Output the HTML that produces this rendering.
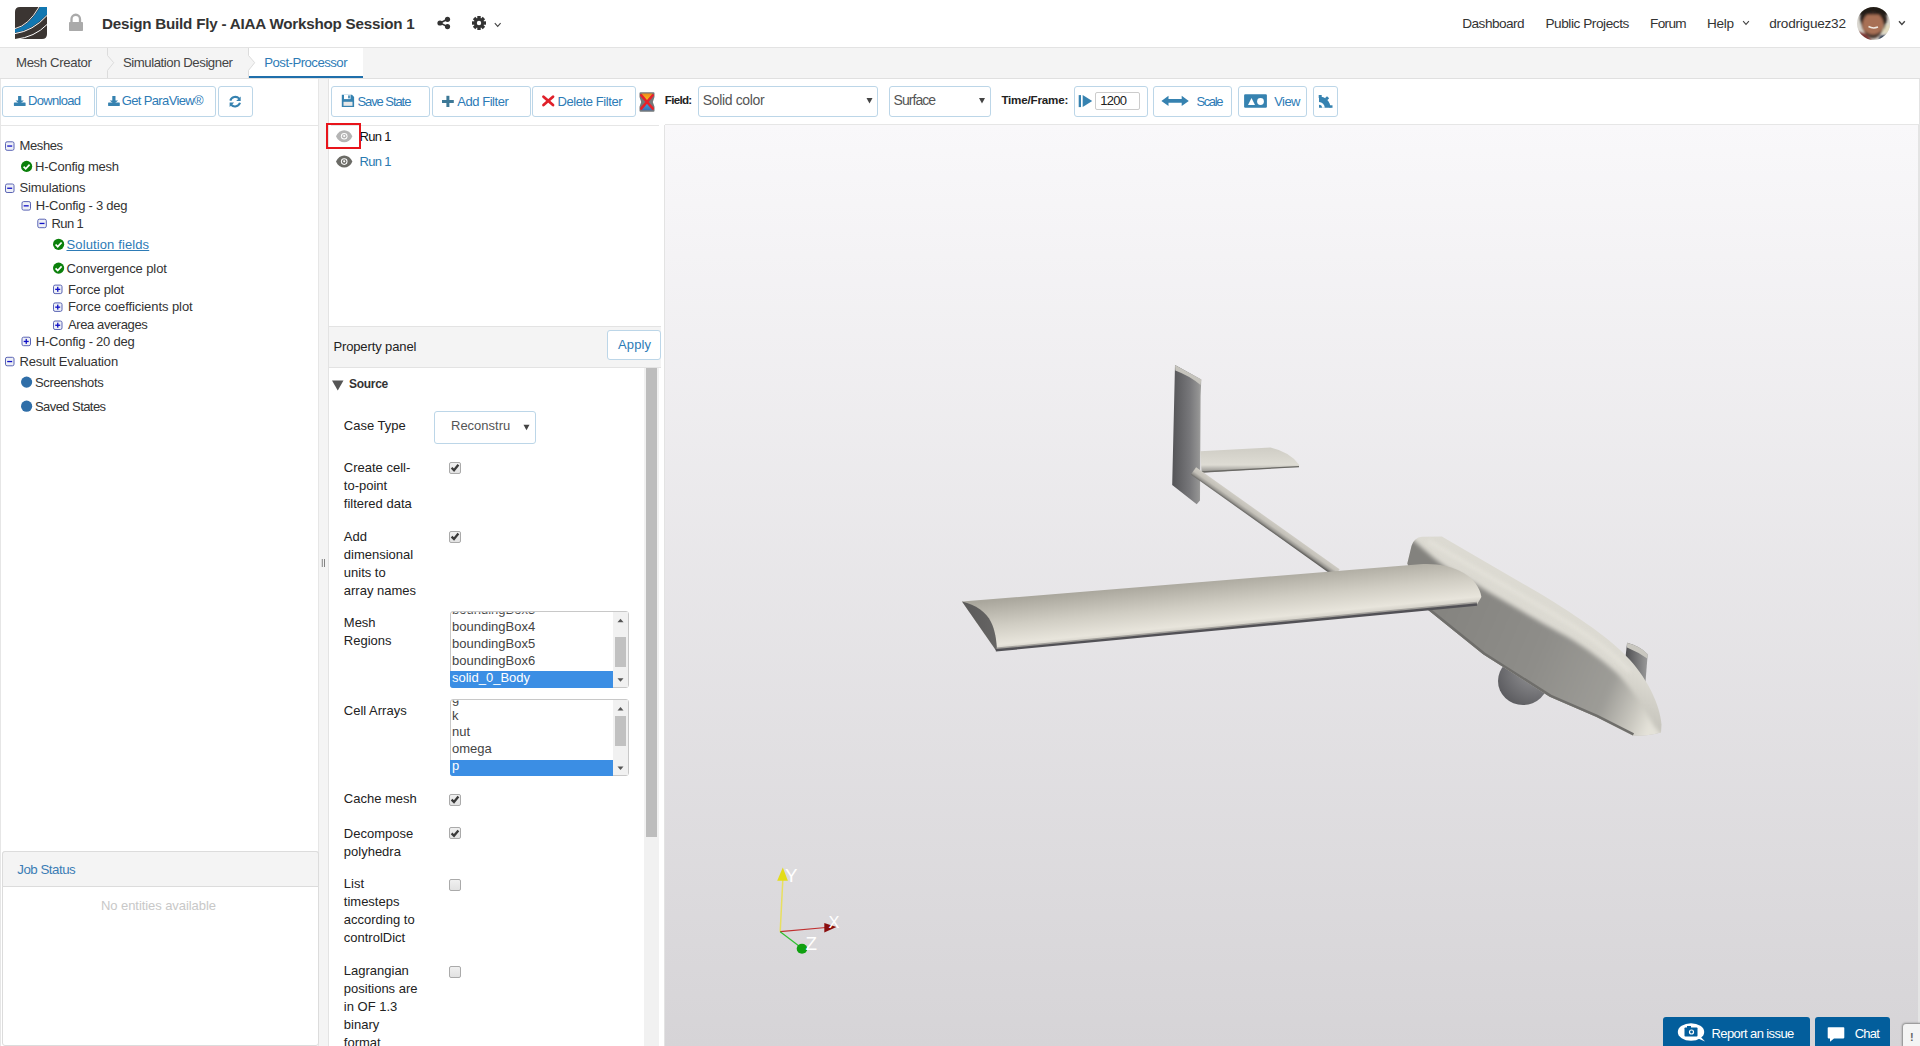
<!DOCTYPE html><html><head><meta charset="utf-8"><style>
html,body{margin:0;padding:0;width:1920px;height:1046px;overflow:hidden;background:#fff;position:relative;font-family:"Liberation Sans",sans-serif}
.t{position:absolute;white-space:nowrap;line-height:1;font-family:"Liberation Sans",sans-serif}
</style></head><body>
<div style="position:absolute;left:0px;top:0px;width:1920px;height:47px;background:#fff"></div>
<div style="position:absolute;left:0px;top:47px;width:1920px;height:1px;background:#e3e3e3"></div>
<div style="position:absolute;left:0px;top:48px;width:1920px;height:30px;background:#f4f4f4"></div>
<div style="position:absolute;left:0px;top:78px;width:1920px;height:1px;background:#e0e0e0"></div>
<div style="position:absolute;left:249px;top:48px;width:114px;height:30px;background:#fff"></div>
<div style="position:absolute;left:249px;top:76px;width:114px;height:2px;background:#1f6fab"></div>
<svg width="1920" height="1046" style="position:absolute;left:0;top:0"><path d="M248.5,55.5 L254.7,62.7 L248.5,70.4 Z" fill="#f4f4f4"/><path d="M107.5,48 V55.5 L113.7,62.7 L107.5,70.4 V78 M248.5,48 V55.5 L254.7,62.7 L248.5,70.4 V78" fill="none" stroke="#dcdcdc" stroke-width="1"/></svg>
<div style="position:absolute;left:0px;top:79px;width:319px;height:967px;background:#fff"></div>
<div style="position:absolute;left:0px;top:79px;width:1px;height:967px;background:#e6e6e6"></div>
<div style="position:absolute;left:318px;top:79px;width:1px;height:967px;background:#e6e6e6"></div>
<div style="position:absolute;left:1px;top:125px;width:318px;height:1px;background:#e6e6e6"></div>
<div style="position:absolute;left:319px;top:79px;width:9px;height:967px;background:#f4f4f4"></div>
<div style="position:absolute;left:328px;top:79px;width:1592px;height:46px;background:#fff"></div>
<div style="position:absolute;left:328px;top:79px;width:1px;height:967px;background:#e3e3e3"></div>
<div style="position:absolute;left:1919px;top:79px;width:1px;height:46px;background:#e3e3e3"></div>
<div style="position:absolute;left:331px;top:125px;width:328px;height:1px;background:#e6e6e6"></div>
<div style="position:absolute;left:329px;top:126px;width:335px;height:920px;background:#fff"></div>
<div style="position:absolute;left:664px;top:125px;width:1px;height:921px;background:#e3e3e3"></div>
<div style="position:absolute;left:329px;top:326px;width:332px;height:41px;background:#f4f4f4"></div>
<div style="position:absolute;left:329px;top:326px;width:332px;height:1px;background:#e3e3e3"></div>
<div style="position:absolute;left:329px;top:367px;width:332px;height:1px;background:#e3e3e3"></div>
<div style="position:absolute;left:644px;top:368px;width:15px;height:678px;background:#f1f1f1"></div>
<div style="position:absolute;left:646px;top:368px;width:11px;height:469px;background:#bdbdbd"></div>
<div style="position:absolute;left:665px;top:125px;width:1253px;height:921px;background:linear-gradient(#f9f8fa,#d6d4d7)"></div>
<div style="position:absolute;left:665px;top:124px;width:1255px;height:1px;background:#e6e6e6"></div>
<div style="position:absolute;left:1918px;top:125px;width:2px;height:921px;background:#e4e4e4"></div>
<div style="position:absolute;left:2px;top:851px;width:317px;height:195px;background:#fff;border:1px solid #dcdcdc;border-radius:3px;box-sizing:border-box"></div>
<div style="position:absolute;left:2px;top:851px;width:317px;height:36px;background:#f4f4f4;border:1px solid #dcdcdc;border-radius:3px 3px 0 0;box-sizing:border-box"></div>
<div class="t" style="left:102.0px;top:16.13px;font-size:15.2px;color:#333;font-weight:bold;letter-spacing:-0.22px;">Design Build Fly - AIAA Workshop Session 1</div>
<div class="t" style="left:1462.3px;top:16.89px;font-size:13.6px;color:#333;letter-spacing:-0.53px;">Dashboard</div>
<div class="t" style="left:1545.4px;top:16.89px;font-size:13.6px;color:#333;letter-spacing:-0.43px;">Public Projects</div>
<div class="t" style="left:1650.0px;top:16.89px;font-size:13.6px;color:#333;letter-spacing:-0.67px;">Forum</div>
<div class="t" style="left:1706.9px;top:16.89px;font-size:13.6px;color:#333;letter-spacing:-0.29px;">Help</div>
<div class="t" style="left:1769.2px;top:16.89px;font-size:13.6px;color:#333;letter-spacing:-0.23px;">drodriguez32</div>
<div class="t" style="left:16.0px;top:55.53px;font-size:13.2px;color:#444;letter-spacing:-0.36px;">Mesh Creator</div>
<div class="t" style="left:123.0px;top:55.53px;font-size:13.2px;color:#444;letter-spacing:-0.45px;">Simulation Designer</div>
<div class="t" style="left:264.3px;top:55.53px;font-size:13.2px;color:#2d7bb6;letter-spacing:-0.53px;">Post-Processor</div>
<div style="position:absolute;left:1.5px;top:86px;width:93px;height:31px;background:#fff;border:1px solid #bcd6e8;border-radius:3px;box-sizing:border-box"></div>
<div style="position:absolute;left:96px;top:86px;width:120px;height:31px;background:#fff;border:1px solid #bcd6e8;border-radius:3px;box-sizing:border-box"></div>
<div style="position:absolute;left:217.5px;top:86px;width:35px;height:31px;background:#fff;border:1px solid #bcd6e8;border-radius:3px;box-sizing:border-box"></div>
<div class="t" style="left:28.0px;top:94.30px;font-size:13px;color:#2d7bb6;letter-spacing:-0.69px;">Download</div>
<div class="t" style="left:121.7px;top:94.30px;font-size:13px;color:#2d7bb6;letter-spacing:-0.63px;">Get ParaView®</div>
<div class="t" style="left:19.5px;top:139.20px;font-size:13px;color:#333;letter-spacing:-0.38px;">Meshes</div>
<div class="t" style="left:35.0px;top:159.90px;font-size:13px;color:#333;letter-spacing:-0.22px;">H-Config mesh</div>
<div class="t" style="left:19.5px;top:181.40px;font-size:13px;color:#333;letter-spacing:-0.12px;">Simulations</div>
<div class="t" style="left:35.8px;top:199.00px;font-size:13px;color:#333;letter-spacing:-0.24px;">H-Config - 3 deg</div>
<div class="t" style="left:51.6px;top:216.60px;font-size:13px;color:#333;letter-spacing:-0.65px;">Run 1</div>
<div class="t" style="left:66.5px;top:237.80px;font-size:13px;color:#2d7bb6;letter-spacing:0.12px;text-decoration:underline;">Solution fields</div>
<div class="t" style="left:66.5px;top:261.60px;font-size:13px;color:#333;letter-spacing:-0.10px;">Convergence plot</div>
<div class="t" style="left:68.0px;top:282.50px;font-size:13px;color:#333;letter-spacing:-0.18px;">Force plot</div>
<div class="t" style="left:68.0px;top:300.30px;font-size:13px;color:#333;letter-spacing:-0.07px;">Force coefficients plot</div>
<div class="t" style="left:68.0px;top:318.40px;font-size:13px;color:#333;letter-spacing:-0.40px;">Area averages</div>
<div class="t" style="left:35.8px;top:334.60px;font-size:13px;color:#333;letter-spacing:-0.23px;">H-Config - 20 deg</div>
<div class="t" style="left:19.5px;top:354.70px;font-size:13px;color:#333;letter-spacing:-0.16px;">Result Evaluation</div>
<div class="t" style="left:35.0px;top:375.60px;font-size:13px;color:#333;letter-spacing:-0.35px;">Screenshots</div>
<div class="t" style="left:35.0px;top:399.70px;font-size:13px;color:#333;letter-spacing:-0.57px;">Saved States</div>
<div class="t" style="left:17.3px;top:862.74px;font-size:13.3px;color:#3b7db5;letter-spacing:-0.49px;">Job Status</div>
<div class="t" style="left:101.0px;top:898.70px;font-size:13px;color:#c8c8c8;letter-spacing:-0.07px;">No entities available</div>
<div style="position:absolute;left:331.4px;top:86px;width:99px;height:31px;background:#fff;border:1px solid #bcd6e8;border-radius:3px;box-sizing:border-box"></div>
<div style="position:absolute;left:431.6px;top:86px;width:99px;height:31px;background:#fff;border:1px solid #bcd6e8;border-radius:3px;box-sizing:border-box"></div>
<div style="position:absolute;left:531.5px;top:86px;width:104px;height:31px;background:#fff;border:1px solid #bcd6e8;border-radius:3px;box-sizing:border-box"></div>
<div class="t" style="left:357.4px;top:95.10px;font-size:13px;color:#2d7bb6;letter-spacing:-1.07px;">Save State</div>
<div class="t" style="left:457.3px;top:95.10px;font-size:13px;color:#2d7bb6;letter-spacing:-0.46px;">Add Filter</div>
<div class="t" style="left:557.5px;top:95.10px;font-size:13px;color:#2d7bb6;letter-spacing:-0.42px;">Delete Filter</div>
<div class="t" style="left:664.8px;top:94.08px;font-size:11.6px;color:#222;font-weight:bold;letter-spacing:-0.71px;">Field:</div>
<div style="position:absolute;left:698.4px;top:86px;width:180px;height:31px;background:#fff;border:1px solid #bcd6e8;border-radius:3px;box-sizing:border-box"></div>
<div class="t" style="left:702.7px;top:92.95px;font-size:14px;color:#555;letter-spacing:-0.34px;">Solid color</div>
<div style="position:absolute;left:889.3px;top:86px;width:101.3px;height:31px;background:#fff;border:1px solid #bcd6e8;border-radius:3px;box-sizing:border-box"></div>
<div class="t" style="left:893.6px;top:92.95px;font-size:14px;color:#555;letter-spacing:-0.96px;">Surface</div>
<div class="t" style="left:1001.4px;top:94.08px;font-size:11.6px;color:#222;font-weight:bold;letter-spacing:-0.18px;">Time/Frame:</div>
<div style="position:absolute;left:1073.5px;top:86px;width:74px;height:31px;background:#fff;border:1px solid #bcd6e8;border-radius:3px;box-sizing:border-box"></div>
<div style="position:absolute;left:1153.4px;top:86px;width:79px;height:31px;background:#fff;border:1px solid #bcd6e8;border-radius:3px;box-sizing:border-box"></div>
<div style="position:absolute;left:1238.2px;top:86px;width:69.3px;height:31px;background:#fff;border:1px solid #bcd6e8;border-radius:3px;box-sizing:border-box"></div>
<div style="position:absolute;left:1313.2px;top:86px;width:24.6px;height:31px;background:#fff;border:1px solid #bcd6e8;border-radius:3px;box-sizing:border-box"></div>
<div style="position:absolute;left:1095.1px;top:92px;width:44.7px;height:18px;background:#fff;border:1px solid #ccc;border-radius:2px;box-sizing:border-box"></div>
<div class="t" style="left:1100.2px;top:94.00px;font-size:13px;color:#222;letter-spacing:-0.71px;">1200</div>
<div class="t" style="left:1196.4px;top:94.50px;font-size:13px;color:#2d7bb6;letter-spacing:-1.38px;">Scale</div>
<div class="t" style="left:1274.2px;top:94.50px;font-size:13px;color:#2d7bb6;letter-spacing:-0.55px;">View</div>
<div class="t" style="left:359.6px;top:130.40px;font-size:13px;color:#111;letter-spacing:-0.67px;">Run 1</div>
<div class="t" style="left:359.6px;top:155.30px;font-size:13px;color:#2a7ab0;letter-spacing:-0.67px;">Run 1</div>
<div style="position:absolute;left:326px;top:123px;width:35px;height:26px;border:2px solid #e8141b;box-sizing:border-box"></div>
<div class="t" style="left:333.4px;top:339.70px;font-size:13px;color:#222;letter-spacing:-0.12px;">Property panel</div>
<div style="position:absolute;left:607.2px;top:330px;width:54.1px;height:30px;background:#fff;border:1px solid #bcd6e8;border-radius:3px;box-sizing:border-box"></div>
<div class="t" style="left:618.0px;top:337.90px;font-size:13px;color:#2d7bb6;letter-spacing:0.12px;">Apply</div>
<div class="t" style="left:348.9px;top:377.54px;font-size:12px;color:#333;font-weight:bold;letter-spacing:-0.26px;">Source</div>
<div class="t" style="left:343.8px;top:419.00px;font-size:13px;color:#222;">Case Type</div>
<div class="t" style="left:343.8px;top:460.60px;font-size:13px;color:#222;">Create cell-</div>
<div class="t" style="left:343.8px;top:478.60px;font-size:13px;color:#222;">to-point</div>
<div class="t" style="left:343.8px;top:496.60px;font-size:13px;color:#222;">filtered data</div>
<div class="t" style="left:343.8px;top:529.50px;font-size:13px;color:#222;">Add</div>
<div class="t" style="left:343.8px;top:547.50px;font-size:13px;color:#222;">dimensional</div>
<div class="t" style="left:343.8px;top:565.50px;font-size:13px;color:#222;">units to</div>
<div class="t" style="left:343.8px;top:583.50px;font-size:13px;color:#222;">array names</div>
<div class="t" style="left:343.8px;top:616.40px;font-size:13px;color:#222;">Mesh</div>
<div class="t" style="left:343.8px;top:634.40px;font-size:13px;color:#222;">Regions</div>
<div class="t" style="left:343.8px;top:704.20px;font-size:13px;color:#222;">Cell Arrays</div>
<div class="t" style="left:343.8px;top:792.40px;font-size:13px;color:#222;">Cache mesh</div>
<div class="t" style="left:343.8px;top:826.60px;font-size:13px;color:#222;">Decompose</div>
<div class="t" style="left:343.8px;top:844.60px;font-size:13px;color:#222;">polyhedra</div>
<div class="t" style="left:343.8px;top:877.00px;font-size:13px;color:#222;">List</div>
<div class="t" style="left:343.8px;top:895.00px;font-size:13px;color:#222;">timesteps</div>
<div class="t" style="left:343.8px;top:913.00px;font-size:13px;color:#222;">according to</div>
<div class="t" style="left:343.8px;top:931.00px;font-size:13px;color:#222;">controlDict</div>
<div class="t" style="left:343.8px;top:964.10px;font-size:13px;color:#222;">Lagrangian</div>
<div class="t" style="left:343.8px;top:982.10px;font-size:13px;color:#222;">positions are</div>
<div class="t" style="left:343.8px;top:1000.10px;font-size:13px;color:#222;">in OF 1.3</div>
<div class="t" style="left:343.8px;top:1018.10px;font-size:13px;color:#222;">binary</div>
<div class="t" style="left:343.8px;top:1036.10px;font-size:13px;color:#222;">format</div>
<div style="position:absolute;left:434.2px;top:411.2px;width:101.6px;height:33.3px;background:#fff;border:1px solid #bcd6e8;border-radius:3px;box-sizing:border-box"></div>
<div class="t" style="left:451.0px;top:419.40px;font-size:13px;color:#555;">Reconstru</div>
<div style="position:absolute;left:449.8px;top:611.2px;width:179px;height:77px;background:#fff;border:1px solid #c8c8c8;border-radius:3px;box-sizing:border-box;overflow:hidden"></div>
<div style="position:absolute;left:612.8px;top:612.2px;width:15px;height:75px;background:#f1f1f1"></div>
<div style="position:absolute;left:615px;top:636.8px;width:10.7px;height:30.300000000000068px;background:#c1c1c1"></div>
<div style="position:absolute;left:450px;top:671.4000000000001px;width:162.8px;height:16.6px;background:#3b8ee4;border-radius:0 0 0 3px"></div>
<div class="t" style="left:452.0px;top:603.40px;font-size:13px;color:#444;clip-path:inset(8.80px -5px -5px -5px);">boundingBox3</div>
<div class="t" style="left:452.0px;top:620.30px;font-size:13px;color:#444;clip-path:inset(-8.10px -5px -5px -5px);">boundingBox4</div>
<div class="t" style="left:452.0px;top:637.20px;font-size:13px;color:#444;clip-path:inset(-25.00px -5px -5px -5px);">boundingBox5</div>
<div class="t" style="left:452.0px;top:654.10px;font-size:13px;color:#444;clip-path:inset(-41.90px -5px -5px -5px);">boundingBox6</div>
<div class="t" style="left:452.0px;top:671.00px;font-size:13px;color:#fff;clip-path:inset(-58.80px -5px -5px -5px);">solid_0_Body</div>
<div style="position:absolute;left:449.8px;top:699.4px;width:179px;height:77px;background:#fff;border:1px solid #c8c8c8;border-radius:3px;box-sizing:border-box;overflow:hidden"></div>
<div style="position:absolute;left:612.8px;top:700.4px;width:15px;height:75px;background:#f1f1f1"></div>
<div style="position:absolute;left:615px;top:715.6px;width:10.7px;height:30.600000000000023px;background:#c1c1c1"></div>
<div style="position:absolute;left:450px;top:759.6px;width:162.8px;height:16.6px;background:#3b8ee4;border-radius:0 0 0 3px"></div>
<div class="t" style="left:452.0px;top:691.60px;font-size:13px;color:#444;clip-path:inset(8.80px -5px -5px -5px);">g</div>
<div class="t" style="left:452.0px;top:708.50px;font-size:13px;color:#444;clip-path:inset(-8.10px -5px -5px -5px);">k</div>
<div class="t" style="left:452.0px;top:725.40px;font-size:13px;color:#444;clip-path:inset(-25.00px -5px -5px -5px);">nut</div>
<div class="t" style="left:452.0px;top:742.30px;font-size:13px;color:#444;clip-path:inset(-41.90px -5px -5px -5px);">omega</div>
<div class="t" style="left:452.0px;top:759.20px;font-size:13px;color:#fff;clip-path:inset(-58.80px -5px -5px -5px);">p</div>
<div style="position:absolute;left:449px;top:461.8px;width:12px;height:12px;background:linear-gradient(#f0f0f0,#e2e2e2);border:1px solid #aaa;border-radius:2px;box-sizing:border-box"></div>
<div style="position:absolute;left:449px;top:530.6px;width:12px;height:12px;background:linear-gradient(#f0f0f0,#e2e2e2);border:1px solid #aaa;border-radius:2px;box-sizing:border-box"></div>
<div style="position:absolute;left:449px;top:793.6px;width:12px;height:12px;background:linear-gradient(#f0f0f0,#e2e2e2);border:1px solid #aaa;border-radius:2px;box-sizing:border-box"></div>
<div style="position:absolute;left:449px;top:827.4000000000001px;width:12px;height:12px;background:linear-gradient(#f0f0f0,#e2e2e2);border:1px solid #aaa;border-radius:2px;box-sizing:border-box"></div>
<div style="position:absolute;left:449px;top:878.6px;width:12px;height:12px;background:linear-gradient(#f0f0f0,#e2e2e2);border:1px solid #aaa;border-radius:2px;box-sizing:border-box"></div>
<div style="position:absolute;left:449px;top:965.7px;width:12px;height:12px;background:linear-gradient(#f0f0f0,#e2e2e2);border:1px solid #aaa;border-radius:2px;box-sizing:border-box"></div>
<div style="position:absolute;left:1663px;top:1017px;width:147px;height:29px;background:#035e9c;border-radius:3px 3px 0 0"></div>
<div style="position:absolute;left:1815px;top:1017px;width:75px;height:29px;background:#035e9c;border-radius:3px 3px 0 0"></div>
<div class="t" style="left:1711.5px;top:1027.30px;font-size:13px;color:#fff;letter-spacing:-0.59px;">Report an issue</div>
<div class="t" style="left:1854.8px;top:1027.30px;font-size:13px;color:#fff;letter-spacing:-0.82px;">Chat</div>
<div style="position:absolute;left:1902.5px;top:1024px;width:18px;height:22px;background:#f4f4f4;border-radius:3px 0 0 0;box-shadow:0 0 2px 1px #8a8a8a"></div>
<svg width="1920" height="1046" style="position:absolute;left:0;top:0"><defs>
<linearGradient id="gfin" x1="0" y1="0" x2="1" y2="0"><stop offset="0" stop-color="#545457"/><stop offset="0.6" stop-color="#77777a"/><stop offset="0.9" stop-color="#929292"/><stop offset="1" stop-color="#a2a2a0"/></linearGradient>
<linearGradient id="gstab" x1="0" y1="0" x2="0" y2="1"><stop offset="0" stop-color="#cfcdc5"/><stop offset="0.7" stop-color="#dedcd4"/><stop offset="1" stop-color="#8d8c88"/></linearGradient>
<linearGradient id="gwing" gradientUnits="userSpaceOnUse" x1="1200" y1="580" x2="1205" y2="630"><stop offset="0" stop-color="#aaa79d"/><stop offset="0.5" stop-color="#d0cdc3"/><stop offset="0.88" stop-color="#e8e5dc"/><stop offset="1" stop-color="#cfccc4"/></linearGradient>
<linearGradient id="gtip" x1="0" y1="0" x2="1" y2="0"><stop offset="0" stop-color="#5a5959"/><stop offset="1" stop-color="#666564"/></linearGradient>
<linearGradient id="gfus" gradientUnits="userSpaceOnUse" x1="1490" y1="600" x2="1470" y2="640"><stop offset="0" stop-color="#dcdad2"/><stop offset="1" stop-color="#c4c2ba"/></linearGradient>
<linearGradient id="gside" gradientUnits="userSpaceOnUse" x1="1420" y1="600" x2="1660" y2="700"><stop offset="0" stop-color="#83827e"/><stop offset="0.5" stop-color="#8e8d89"/><stop offset="0.8" stop-color="#9d9c97"/><stop offset="0.93" stop-color="#c9c7bf"/><stop offset="1" stop-color="#e4e2d9"/></linearGradient>
<radialGradient id="gpod" cx="0.75" cy="0.25" r="0.9"><stop offset="0" stop-color="#9a9a9c"/><stop offset="1" stop-color="#58585c"/></radialGradient>
<linearGradient id="gnf" x1="0" y1="0" x2="1" y2="0"><stop offset="0" stop-color="#4f4f52"/><stop offset="1" stop-color="#9a9a9a"/></linearGradient>
<linearGradient id="gboom" x1="0" y1="0" x2="0" y2="1"><stop offset="0" stop-color="#d6d4cc"/><stop offset="1" stop-color="#9c9a94"/></linearGradient>
</defs><path d="M1175,365 L1201.3,379.5 L1200.6,396 L1200,500.4 L1196.7,504.2 L1172.2,485.1 Z" fill="url(#gfin)"/><path d="M1175,365 L1201.3,379.5 L1200.5,385 Q1190,376 1175.3,370.5 Z" fill="#c6c4bd"/><path d="M1200.1,451.3 L1270.5,447.5 Q1290,452 1299.1,464.7 L1299,467 L1201.6,472.4 Z" fill="url(#gstab)"/><path d="M1201.6,472 L1299,466.6" stroke="#6a6965" stroke-width="1.3"/><defs><linearGradient id="gbm" gradientUnits="userSpaceOnUse" x1="1266.6" y1="517.3" x2="1261.4" y2="524.7"><stop offset="0" stop-color="#cfccc4"/><stop offset="0.45" stop-color="#c3c0b8"/><stop offset="0.75" stop-color="#9a9893"/><stop offset="1" stop-color="#5f5e5b"/></linearGradient></defs><line x1="1193.5" y1="470.8" x2="1337" y2="573" stroke="url(#gbm)" stroke-width="9"/><ellipse cx="1523" cy="681" rx="25" ry="24" fill="url(#gpod)"/><path d="M1627.1,642.8 Q1640,646 1647.7,654.2 L1645.4,683.3 Q1629,674 1625.5,657.3 Z" fill="url(#gnf)"/><path d="M1627.1,642.8 Q1640,646 1647.7,654.2 L1647.2,658.5 Q1638,652 1627,647.5 Z" fill="#c9c7c0"/><defs><clipPath id="cfus"><path d="M1407.3,563.6 L1411.5,546 Q1414,537.5 1422,536.8 L1441.8,536.4 L1540,593.6 C1580,618 1612,640 1630,660 C1648,680 1660,705 1661.5,724.6 L1661,732.5 C1650,735.5 1640,736 1632.9,735.5 L1596.5,717 L1549.7,696.7 L1483.1,654.3 L1426.9,608.9 Z"/></clipPath><filter id="blur2" x="-10%" y="-10%" width="120%" height="120%"><feGaussianBlur stdDeviation="2.2"/></filter></defs><path d="M1407.3,563.6 L1411.5,546 Q1414,537.5 1422,536.8 L1441.8,536.4 L1540,593.6 C1580,618 1612,640 1630,660 C1648,680 1660,705 1661.5,724.6 L1661,732.5 C1650,735.5 1640,736 1632.9,735.5 L1596.5,717 L1549.7,696.7 L1483.1,654.3 L1426.9,608.9 Z" fill="url(#gfus)"/><g clip-path="url(#cfus)"><path d="M1395,535 L1413,540 C1425,550 1440,565 1452,570.5 C1465,577 1480,587 1495,595.7 C1520,610 1545,625 1565.9,635.9 C1585,647 1605,662 1619.4,675.7 C1632,690 1645,708 1653,724.6 L1670,745 L1420,700 Z" fill="url(#gside)" filter="url(#blur2)"/><path d="M1632.9,735.5 L1596.5,717 L1549.7,696.7 L1483.1,654.3 L1426.9,608.9" fill="none" stroke="#6f6e6b" stroke-width="5"/><path d="M1428,541 C1460,560 1520,594 1560,618 C1590,636 1615,655 1630,672" fill="none" stroke="#e6e4dc" stroke-width="4" filter="url(#blur2)" opacity="0.8"/></g><path d="M962,601.6 L1419.8,564.3 C1450,562 1478,575 1481.4,597 L1477,604.5 L995.8,650.3 Z" fill="url(#gwing)"/><path d="M962,601.6 L995.8,650.3 L997,650 C996.5,640 995,630 991,622 C986,612 976,605 962,601.6 Z" fill="url(#gtip)"/><path d="M996,648.6 L1477,602.8" stroke="#8d8b88" stroke-width="2" opacity="0.7"/><path d="M995.8,650.3 L1477,604.5" stroke="#525156" stroke-width="2.4"/><line x1="780.2" y1="931.7" x2="782.8" y2="880" stroke="#e8e060" stroke-width="1.5"/><path d="M782.8,867.4 L777.2,880.8 L787.9,880.8 Z" fill="#e3dc1a"/><line x1="780.2" y1="931.7" x2="826" y2="927.5" stroke="#c03030" stroke-width="1.2"/><path d="M836.4,927 L824.3,923 L824.3,932.4 Z" fill="#8a0d0d"/><line x1="780.2" y1="931.7" x2="799" y2="946" stroke="#30c030" stroke-width="1.2"/><ellipse cx="802" cy="948.7" rx="5.3" ry="5" fill="#10a010"/><text x="785" y="881.5" font-family="Liberation Sans" font-size="19" fill="#fff" textLength="12.5" lengthAdjust="spacingAndGlyphs">Y</text><text x="828.5" y="928" font-family="Liberation Sans" font-size="17" fill="#fff" textLength="11" lengthAdjust="spacingAndGlyphs">X</text><text x="805.5" y="950" font-family="Liberation Sans" font-size="19" fill="#fff" textLength="11.5" lengthAdjust="spacingAndGlyphs">Z</text><g transform="translate(15,7)"><path d="M0,5 Q0,0 5,0 L32,0 L32,27 Q32,32 27,32 L0,32 Z" fill="#3b3532"/><path d="M0,22.3 Q14,19 25,0 L32,0 L32,7.5 Q18,23 0,25.8 Z" fill="#1177b1"/><path d="M0,21.6 Q13.5,18.5 24,0" fill="none" stroke="#fff" stroke-width="0.9"/><path d="M0,26.6 Q18,24 32,8.5" fill="none" stroke="#fff" stroke-width="1"/><path d="M0,32.5 Q20,30 32,17.5" fill="none" stroke="#fff" stroke-width="1"/></g><path d="M71.5,22.5 V19 A4.2,4.2 0 0 1 80,19 V22.5" fill="none" stroke="#aaa" stroke-width="2.3"/><rect x="69" y="22" width="14" height="9" rx="0.8" fill="#aaa"/><rect x="5.5" y="141.79999999999998" width="8.5" height="8.5" rx="1.6" fill="#eef0f6" stroke="#5a64b4" stroke-width="1"/><rect x="7.2" y="145.39999999999998" width="5" height="1.3" fill="#1010c8"/><circle cx="26.6" cy="166.4" r="5.6" fill="#0b800b"/><path d="M23.6,166.6 L25.700000000000003,168.8 L29.6,164.6" fill="none" stroke="#fff" stroke-width="1.7"/><rect x="5.5" y="184.0" width="8.5" height="8.5" rx="1.6" fill="#eef0f6" stroke="#5a64b4" stroke-width="1"/><rect x="7.2" y="187.6" width="5" height="1.3" fill="#1010c8"/><rect x="22.0" y="201.6" width="8.5" height="8.5" rx="1.6" fill="#eef0f6" stroke="#5a64b4" stroke-width="1"/><rect x="23.7" y="205.2" width="5" height="1.3" fill="#1010c8"/><rect x="37.8" y="219.2" width="8.5" height="8.5" rx="1.6" fill="#eef0f6" stroke="#5a64b4" stroke-width="1"/><rect x="39.5" y="222.79999999999998" width="5" height="1.3" fill="#1010c8"/><circle cx="58.6" cy="244.3" r="5.6" fill="#0b800b"/><path d="M55.6,244.5 L57.7,246.70000000000002 L61.6,242.5" fill="none" stroke="#fff" stroke-width="1.7"/><circle cx="58.6" cy="268.1" r="5.6" fill="#0b800b"/><path d="M55.6,268.3 L57.7,270.5 L61.6,266.3" fill="none" stroke="#fff" stroke-width="1.7"/><rect x="53.5" y="285.1" width="8.5" height="8.5" rx="1.6" fill="#eef0f6" stroke="#5a64b4" stroke-width="1"/><rect x="55.2" y="288.70000000000005" width="5" height="1.3" fill="#1010c8"/><rect x="57.1" y="286.8" width="1.3" height="5" fill="#1010c8"/><rect x="53.5" y="302.90000000000003" width="8.5" height="8.5" rx="1.6" fill="#eef0f6" stroke="#5a64b4" stroke-width="1"/><rect x="55.2" y="306.50000000000006" width="5" height="1.3" fill="#1010c8"/><rect x="57.1" y="304.6" width="1.3" height="5" fill="#1010c8"/><rect x="53.5" y="321.0" width="8.5" height="8.5" rx="1.6" fill="#eef0f6" stroke="#5a64b4" stroke-width="1"/><rect x="55.2" y="324.6" width="5" height="1.3" fill="#1010c8"/><rect x="57.1" y="322.7" width="1.3" height="5" fill="#1010c8"/><rect x="22.0" y="337.20000000000005" width="8.5" height="8.5" rx="1.6" fill="#eef0f6" stroke="#5a64b4" stroke-width="1"/><rect x="23.7" y="340.80000000000007" width="5" height="1.3" fill="#1010c8"/><rect x="25.6" y="338.90000000000003" width="1.3" height="5" fill="#1010c8"/><rect x="5.5" y="357.3" width="8.5" height="8.5" rx="1.6" fill="#eef0f6" stroke="#5a64b4" stroke-width="1"/><rect x="7.2" y="360.90000000000003" width="5" height="1.3" fill="#1010c8"/><circle cx="26.6" cy="382.1" r="5.6" fill="#2f6ea8"/><circle cx="26.6" cy="406.2" r="5.6" fill="#2f6ea8"/><path d="M336.0,136.3 C339.2,128.3 349.2,128.3 352.4,136.3 C349.2,144.3 339.2,144.3 336.0,136.3 Z" fill="#b4b4b4"/><circle cx="344.2" cy="136.3" r="3.3" fill="#fff"/><circle cx="344.2" cy="136.3" r="2.3" fill="#b4b4b4"/><circle cx="344.2" cy="136.0" r="1.1" fill="#fff"/><path d="M336.0,161.6 C339.2,153.6 349.2,153.6 352.4,161.6 C349.2,169.6 339.2,169.6 336.0,161.6 Z" fill="#6b6b66"/><circle cx="344.2" cy="161.6" r="3.3" fill="#fff"/><circle cx="344.2" cy="161.6" r="2.3" fill="#6b6b66"/><circle cx="344.2" cy="161.29999999999998" r="1.1" fill="#fff"/><path d="M341.8,94.8 H352 L354.1,96.9 V107 H341.8 Z" fill="#3682b0"/><rect x="343.5" y="101.8" width="9" height="4" fill="#e8e8e8"/><rect x="344" y="94.8" width="6.5" height="4.3" fill="#fff"/><rect x="348.2" y="95.4" width="1.6" height="3" fill="#3682b0"/><rect x="442" y="100" width="11.8" height="3" fill="#3d7896"/><rect x="446.4" y="95.8" width="3" height="11.2" fill="#3d7896"/><path d="M543.5,96.7 L553,105 M553,96.7 L543.5,105" stroke="#e0202a" stroke-width="2.8" stroke-linecap="round"/><path d="M639.5,93.2 Q639.5,92.2 640.5,92.2 H653.5 Q654.5,92.2 654.5,93.2 V97 L652.8,101.9 L654.5,106.8 V110.7 Q654.5,111.7 653.5,111.7 H640.5 Q639.5,111.7 639.5,110.7 V106.8 L641.2,101.9 L639.5,97 Z" fill="#74787a"/><defs><linearGradient id="ghg1" x1="0" y1="0" x2="0" y2="1"><stop offset="0" stop-color="#f08a1c"/><stop offset="1" stop-color="#f7c21a"/></linearGradient><linearGradient id="ghg2" x1="0" y1="0" x2="0" y2="1"><stop offset="0" stop-color="#38a8e0"/><stop offset="1" stop-color="#3f6fb8"/></linearGradient></defs><path d="M641.3,93.6 H652.7 L647,100.8 Z" fill="url(#ghg1)"/><path d="M641.3,110.3 H652.7 L647,103 Z" fill="url(#ghg2)"/><path d="M641.2,95.3 L652.8,108.6 M652.8,95.3 L641.2,108.6" stroke="#e8202a" stroke-width="2.5" stroke-linecap="round"/><path d="M866.5,98.0 H872.5 L869.5,103.4 Z" fill="#444"/><path d="M979,98.0 H985 L982,103.4 Z" fill="#444"/><path d="M523.5,424.8 H529.5 L526.5,430.2 Z" fill="#444"/><rect x="1078.7" y="95.1" width="2.3" height="12" fill="#3682b0"/><path d="M1082.7,95.1 L1092.2,101.1 L1082.7,107.1 Z" fill="#3682b0"/><path d="M1161.4,100.9 L1168.5,95.8 V99 H1181.7 V95.8 L1188.8,100.9 L1181.7,106 V102.8 H1168.5 V106 Z" fill="#3682b0"/><rect x="1244.1" y="94.2" width="22.8" height="13.6" rx="1.2" fill="#3682b0"/><path d="M1248,105 L1251.5,98 L1255,105 Z" fill="#fff"/><circle cx="1260.5" cy="101.5" r="3.4" fill="#fff"/><g fill="#3682b0"><path d="M1319,96.5 V107.8 H1330.5 A11.5,11.5 0 0 0 1319,96.5 Z"/><rect x="1318.7" y="95" width="3" height="3"/><rect x="1329.5" y="105.3" width="3" height="2.5"/><rect x="1325.5" y="96.8" width="3" height="3" transform="rotate(45 1327 98.3)"/></g><path d="M1319,102 A5.8,5.8 0 0 1 1324.8,107.8 H1322 A3,3 0 0 0 1319,104.8 Z" fill="#fff"/><path d="M18.1,96.1 H21.3 V100.5 H23.9 L19.7,104 L15.5,100.5 H18.1 Z" fill="#3682b0"/><rect x="13.9" y="102.5" width="11.7" height="3.5" rx="0.6" fill="#3682b0"/><path d="M112.3,96.1 H115.5 V100.5 H118.1 L113.89999999999999,104 L109.69999999999999,100.5 H112.3 Z" fill="#3682b0"/><rect x="108.1" y="102.5" width="11.7" height="3.5" rx="0.6" fill="#3682b0"/><path d="M230.3,100.6 A5.3,5.3 0 0 1 239.2,98.6" fill="none" stroke="#3682b0" stroke-width="2.1"/><path d="M240.7,96.5 V101 H236.2 Z" fill="#3682b0"/><path d="M240,102.8 A5.3,5.3 0 0 1 231.1,104.8" fill="none" stroke="#3682b0" stroke-width="2.1"/><path d="M229.6,106.9 V102.4 H234.1 Z" fill="#3682b0"/><g fill="#333"><circle cx="440" cy="23" r="2.6"/><circle cx="447.5" cy="19.3" r="2.6"/><circle cx="447.5" cy="26.6" r="2.6"/></g><path d="M440,23 L447.5,19.3 M440,23 L447.5,26.6" stroke="#333" stroke-width="1.6"/><g transform="translate(479,23)" fill="#333"><rect x="-1.7" y="-7" width="3.4" height="4" transform="rotate(0)"/><rect x="-1.7" y="-7" width="3.4" height="4" transform="rotate(45)"/><rect x="-1.7" y="-7" width="3.4" height="4" transform="rotate(90)"/><rect x="-1.7" y="-7" width="3.4" height="4" transform="rotate(135)"/><rect x="-1.7" y="-7" width="3.4" height="4" transform="rotate(180)"/><rect x="-1.7" y="-7" width="3.4" height="4" transform="rotate(225)"/><rect x="-1.7" y="-7" width="3.4" height="4" transform="rotate(270)"/><rect x="-1.7" y="-7" width="3.4" height="4" transform="rotate(315)"/><circle r="5"/><circle r="2.2" fill="#fff"/></g><path d="M494.8,23.2 L497.7,26.4 L500.59999999999997,23.2" fill="none" stroke="#444" stroke-width="1.1"/><path d="M1743.1,21.2 L1746,24.4 L1748.9,21.2" fill="none" stroke="#444" stroke-width="1.1"/><path d="M1899.0,21.2 L1901.9,24.4 L1904.8000000000002,21.2" fill="none" stroke="#444" stroke-width="1.4"/><defs><clipPath id="cav"><circle cx="1873.5" cy="23.4" r="16.5"/></clipPath><filter id="bl1"><feGaussianBlur stdDeviation="0.9"/></filter></defs><g clip-path="url(#cav)"><rect x="1856" y="6" width="36" height="36" fill="#d9d6cf"/><g filter="url(#bl1)"><rect x="1880" y="25" width="12" height="8" fill="#e3dcc0"/><path d="M1860,19 Q1860,8 1873,7.5 Q1887,8 1887,20 L1884,30 Q1884,16 1873,13 Q1863,15 1863,30 Z" fill="#2a211d"/><ellipse cx="1873" cy="25" rx="10.5" ry="12.5" fill="#a86f55"/><path d="M1862.5,26 Q1866,38 1873,38.5 Q1881,38 1884,26 Q1881,34 1873,34.5 Q1865,34 1862.5,26 Z" fill="#4e3a30"/><path d="M1859,8 Q1873,2 1888,9 L1888,15 Q1873,8 1859,15 Z" fill="#231b18"/><path d="M1856,31 L1866,34 L1873,42 L1856,42 Z" fill="#7a3530"/><path d="M1880,36 L1890,34 L1890,42 L1878,42 Z" fill="#1f2a45"/><rect x="1866" y="12.5" width="14" height="2" fill="#2a211d"/></g><path d="M1868.5,26.5 Q1873,29 1878,27" fill="none" stroke="#f0e8e0" stroke-width="1.5"/></g><path d="M332,380.5 H343.5 L337.75,390.5 Z" fill="#555"/><rect x="321.8" y="559" width="0.9" height="8" fill="#777"/><rect x="324" y="559" width="0.9" height="8" fill="#777"/><path d="M451.6,467.8 L454,470.20000000000005 L458.4,464.8" fill="none" stroke="#3a3a3a" stroke-width="2.3"/><path d="M451.6,536.6 L454,539.0 L458.4,533.6" fill="none" stroke="#3a3a3a" stroke-width="2.3"/><path d="M451.6,799.6 L454,802.0 L458.4,796.6" fill="none" stroke="#3a3a3a" stroke-width="2.3"/><path d="M451.6,833.4000000000001 L454,835.8000000000001 L458.4,830.4000000000001" fill="none" stroke="#3a3a3a" stroke-width="2.3"/><path d="M617.5,622.2 H623.5 L620.5,618.7 Z" fill="#555"/><path d="M617.5,678.2 H623.5 L620.5,681.7 Z" fill="#555"/><path d="M617.5,710.4 H623.5 L620.5,706.9 Z" fill="#555"/><path d="M617.5,766.4 H623.5 L620.5,769.9 Z" fill="#555"/><ellipse cx="1691" cy="1032" rx="13.2" ry="8.8" fill="#fff"/><path d="M1697,1038 L1705,1041.5 L1699,1035 Z" fill="#fff"/><rect x="1684.5" y="1027.5" width="13" height="9" rx="0.8" fill="#035e9c"/><rect x="1687" y="1026" width="4" height="2" fill="#035e9c"/><circle cx="1691.5" cy="1032" r="2.6" fill="#fff"/><circle cx="1691.5" cy="1032" r="1.4" fill="#035e9c"/><path d="M1828.5,1027.2 H1843.5 Q1844.3,1027.2 1844.3,1028 V1037.6 Q1844.3,1038.4 1843.5,1038.4 H1834 L1830,1041.8 V1038.4 H1828.5 Q1827.7,1038.4 1827.7,1037.6 V1028 Q1827.7,1027.2 1828.5,1027.2 Z" fill="#fff"/><text x="1910" y="1041" font-family="Liberation Sans" font-size="11" font-weight="bold" fill="#666">!</text></svg>
</body></html>
